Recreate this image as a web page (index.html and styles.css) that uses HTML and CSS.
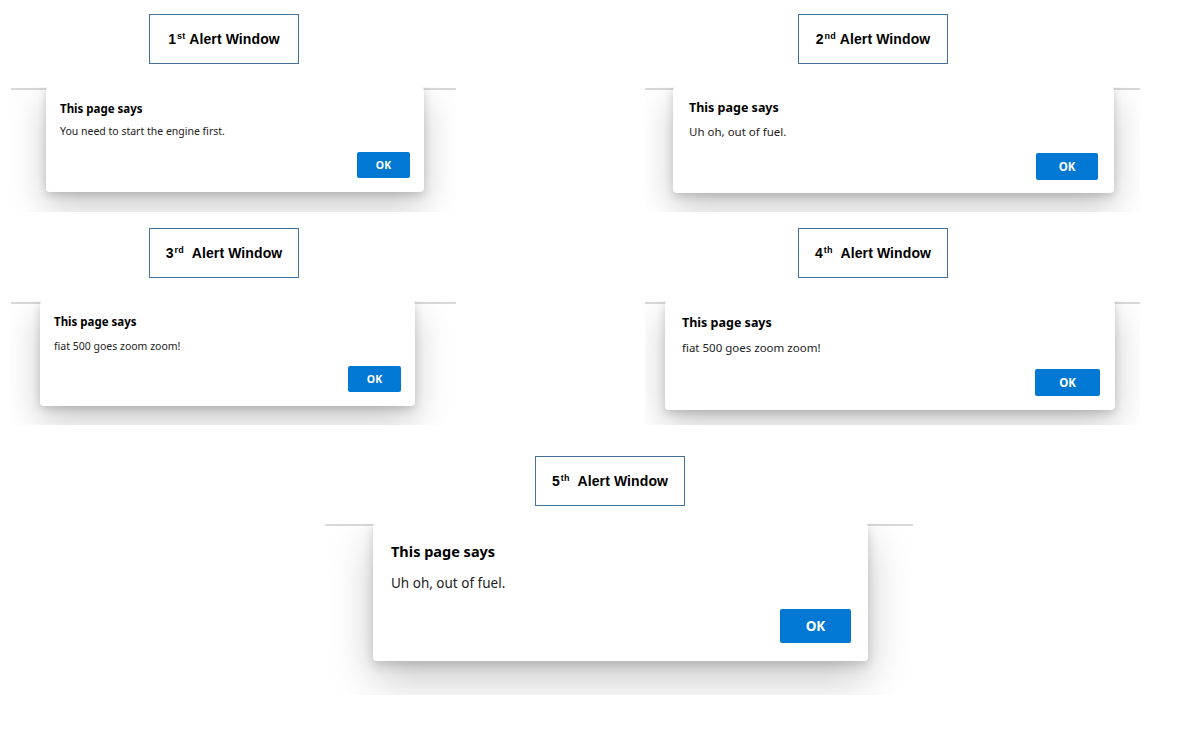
FILE: index.html
```html
<!DOCTYPE html>
<html lang="en">
<head>
<meta charset="utf-8">
<title>Alert Windows</title>
<link rel="stylesheet" href="styles.css">
</head>
<body>
<main class="sheet">
  <div class="row row-top">
    <section class="cell cell-left">
      <div class="label">1<sup>st</sup>&nbsp;Alert Window</div>
      <div class="panel p1">
        <div class="dialog">
          <div class="title">This page says</div>
          <div class="msg">You need to start the engine first.</div>
          <div class="foot"><span class="ok">OK</span></div>
        </div>
      </div>
    </section>
    <section class="cell cell-right">
      <div class="label">2<sup>nd</sup>&nbsp;Alert Window</div>
      <div class="panel p2">
        <div class="dialog">
          <div class="title">This page says</div>
          <div class="msg">Uh oh, out of fuel.</div>
          <div class="foot"><span class="ok">OK</span></div>
        </div>
      </div>
    </section>
  </div>
  <div class="row row-mid">
    <section class="cell cell-left">
      <div class="label">3<sup>rd</sup>&nbsp;&nbsp;Alert Window</div>
      <div class="panel p3">
        <div class="dialog">
          <div class="title">This page says</div>
          <div class="msg">fiat 500 goes zoom zoom!</div>
          <div class="foot"><span class="ok">OK</span></div>
        </div>
      </div>
    </section>
    <section class="cell cell-right">
      <div class="label">4<sup>th</sup>&nbsp;&nbsp;Alert Window</div>
      <div class="panel p4">
        <div class="dialog">
          <div class="title">This page says</div>
          <div class="msg">fiat 500 goes zoom zoom!</div>
          <div class="foot"><span class="ok">OK</span></div>
        </div>
      </div>
    </section>
  </div>
  <section class="cell cell-center">
    <div class="label">5<sup>th</sup>&nbsp;&nbsp;Alert Window</div>
    <div class="panel p5">
      <div class="dialog">
        <div class="title">This page says</div>
        <div class="msg">Uh oh, out of fuel.</div>
        <div class="foot"><span class="ok">OK</span></div>
      </div>
    </div>
  </section>
</main>
</body>
</html>
```

FILE: styles.css
```css
* { box-sizing: border-box; }

html, body {
  margin: 0;
  padding: 0;
  background: #ffffff;
}

body {
  font-family: "Noto Sans", "Open Sans", sans-serif;
  color: #000;
}

.sheet {
  width: 1180px;
  height: 734px;
  padding-top: 14px;
}

.row {
  display: flex;
  gap: 189px;
  padding-left: 11px;
}

.row-mid { margin-top: 16px; }

.cell {
  display: flex;
  flex-direction: column;
}

.cell-left { width: 445px; }
.cell-right { width: 495px; }
.cell-center {
  width: 588px;
  margin-left: 325px;
  margin-top: 31px;
}

.label {
  width: 150px;
  height: 50px;
  border: 1px solid #41719c;
  display: flex;
  align-items: center;
  justify-content: center;
  font-family: "Liberation Sans", Arial, sans-serif;
  font-weight: bold;
  font-size: 14px;
  letter-spacing: 0.1px;
  white-space: nowrap;
}

.label sup {
  font-size: 9px;
  line-height: 0;
  position: relative;
  top: -3px;
  margin-left: 1px;
}

.cell-left .label { margin-left: 138px; }
.cell-right .label { margin-left: 153px; }
.cell-center .label { margin-left: 210px; }

.panel {
  margin-top: 23px;
  overflow: hidden;
  background: linear-gradient(#d9d9d9, #d9d9d9) 0 1px / 100% 2px no-repeat, #ffffff;
  display: flex;
  align-items: flex-start;
}

.cell-center .panel { margin-top: 17px; }

.dialog {
  background: #fff;
  border-radius: 4px;
  display: flex;
  flex-direction: column;
  box-shadow: 0 14px 36px rgba(0, 0, 0, 0.22), 0 3px 9px rgba(0, 0, 0, 0.16);
  font-family: "Noto Sans", "Open Sans", sans-serif;
}

.title {
  font-weight: bold;
  color: #000;
  white-space: nowrap;
}

.msg {
  color: #222;
  white-space: nowrap;
}

.foot {
  display: flex;
  justify-content: flex-end;
}

.ok {
  background: #0078d4;
  color: #fff;
  border-radius: 2px;
  font-weight: bold;
  display: flex;
  align-items: center;
  justify-content: center;
}

/* Panel 1 */
.p1 { height: 125px; padding-left: 35px; }
.p1 .dialog { width: 378px; height: 105px; padding: 14px 14px 14px 14px; }
.p1 .title { font-size: 11.5px; line-height: 16px; }
.p1 .msg { font-size: 10.5px; line-height: 16px; margin-top: 6px; }
.p1 .foot { margin-top: 13px; }
.p1 .ok { width: 53px; height: 26px; font-size: 10.5px; }

/* Panel 2 */
.p2 { height: 125px; padding-left: 28px; }
.p2 .dialog { width: 441px; height: 106px; padding: 13px 16px 13px 16px; }
.p2 .title { font-size: 12.5px; line-height: 16px; }
.p2 .msg { font-size: 11.5px; line-height: 16px; margin-top: 8px; }
.p2 .foot { margin-top: 13px; }
.p2 .ok { width: 62px; height: 27px; font-size: 11.5px; }

/* Panel 3 */
.p3 { height: 124px; padding-left: 29px; }
.p3 .dialog { width: 375px; height: 105px; padding: 13px 14px 14px 14px; }
.p3 .title { font-size: 11.5px; line-height: 16px; }
.p3 .msg { font-size: 10.5px; line-height: 16px; margin-top: 8px; }
.p3 .foot { margin-top: 12px; }
.p3 .ok { width: 53px; height: 26px; font-size: 10.5px; }

/* Panel 4 */
.p4 { height: 124px; padding-left: 20px; }
.p4 .dialog { width: 450px; height: 109px; padding: 14px 15px 14px 17px; }
.p4 .title { font-size: 12.5px; line-height: 16px; }
.p4 .msg { font-size: 11.5px; line-height: 16px; margin-top: 9px; }
.p4 .foot { margin-top: 13px; }
.p4 .ok { width: 65px; height: 27px; font-size: 11.5px; }

/* Panel 5 */
.p5 { height: 172px; padding-left: 48px; }
.p5 .dialog {
  width: 495px;
  height: 138px;
  padding: 18px 17px 18px 18px;
  box-shadow: 0 18px 44px rgba(0, 0, 0, 0.22), 0 4px 11px rgba(0, 0, 0, 0.16);
}
.p5 .title { font-size: 14.5px; line-height: 20px; }
.p5 .msg { font-size: 13.5px; line-height: 20px; margin-top: 12px; }
.p5 .foot { margin-top: 16px; }
.p5 .ok { width: 71px; height: 34px; font-size: 13.5px; }
```
